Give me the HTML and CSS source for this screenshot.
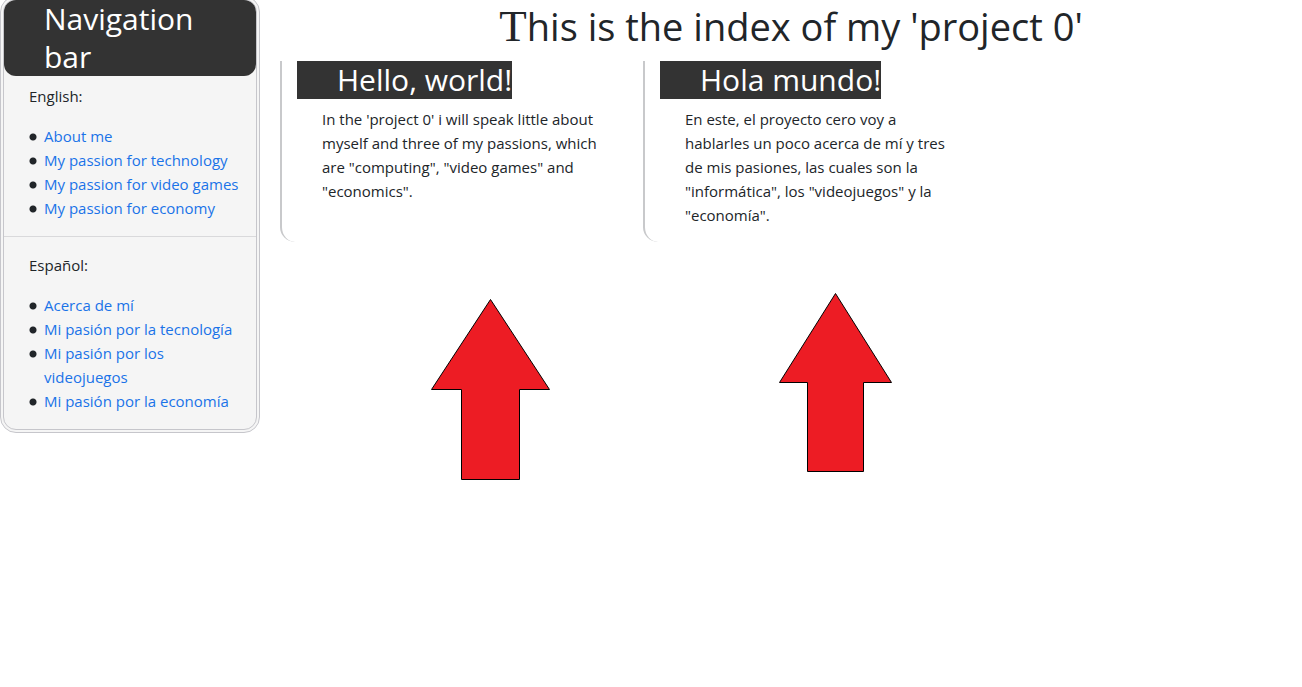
FILE: index.html
```html
<!DOCTYPE html>
<html lang="en">
<head>
<meta charset="utf-8">
<meta name="viewport" content="width=device-width, initial-scale=1">
<title>Project 0</title>
<link rel="stylesheet" href="styles.css">
</head>
<body>
<div class="page">
  <nav class="sidebar">
    <h2 class="heading sidebar-title">Navigation bar</h2>
    <p class="label">English:</p>
    <ul class="links">
      <li><a href="#about">About me</a></li>
      <li><a href="#technology">My passion for technology</a></li>
      <li><a href="#games">My passion for video games</a></li>
      <li><a href="#economy">My passion for economy</a></li>
    </ul>
    <hr class="divider">
    <p class="label">Español:</p>
    <ul class="links">
      <li><a href="#acerca">Acerca de mí</a></li>
      <li><a href="#tecnologia">Mi pasión por la tecnología</a></li>
      <li><a href="#videojuegos">Mi pasión por los videojuegos</a></li>
      <li><a href="#economia">Mi pasión por la economía</a></li>
    </ul>
  </nav>
  <main class="content">
    <h1 class="title">This is the index of my 'project 0'</h1>
    <div class="columns">
      <section class="column">
        <h2 class="heading">Hello, world!</h2>
        <p class="text">In the 'project 0' i will speak little about myself and three of my passions, which are "computing", "video games" and "economics".</p>
      </section>
      <section class="column" lang="es">
        <h2 class="heading">Hola mundo!</h2>
        <p class="text">En este, el proyecto cero voy a hablarles un poco acerca de mí y tres de mis pasiones, las cuales son la "informática", los "videojuegos" y la "economía".</p>
      </section>
    </div>
    <div class="arrows">
      <svg class="arrow" width="119" height="181" viewBox="0 0 119 181" aria-hidden="true"><path d="M59.5 .5L118.500 90.500H88.500V180.500H30.500V90.500H.5Z"/></svg>
      <svg class="arrow" width="113" height="179" viewBox="0 0 113 179" aria-hidden="true"><path d="M56.500 .5L112.500 89.500H84.500V178.500H28.500V89.500H.5Z"/></svg>
    </div>
  </main>
</div>
</body>
</html>
```
FILE: styles.css
```css
* {
  box-sizing: border-box;
}

body {
  margin: 0;
  background: #fff;
  color: #212529;
  font: 15px/24px "Open Sans", "Noto Sans", sans-serif;
}

.page {
  display: flex;
  align-items: flex-start;
  gap: 20px;
}

.sidebar {
  flex: 0 0 260px;
  margin-top: -4px;
  border: 4px double #c6c6cb;
  border-radius: 16px;
  background: #f5f5f5;
}

.heading {
  width: fit-content;
  margin: 0 0 8px;
  padding-left: 40px;
  background: #333;
  color: #fff;
  font-size: 30px;
  font-weight: 400;
  line-height: 38px;
}

.sidebar-title {
  width: auto;
  padding-right: 40px;
  border-radius: 12px;
}

.label {
  margin: 0 0 16px;
  padding-left: 25px;
}

.links {
  margin: 0 0 16px;
  padding: 0 12px 0 25px;
  list-style: none;
}

.links li {
  padding-left: 15px;
  background: radial-gradient(circle at 4px 13px, #212529 3px, transparent 4px) no-repeat;
}

.links a {
  color: #1a73e8;
  text-decoration: none;
}

.divider {
  margin: 16px 0;
  border: 0;
  border-top: 1px solid #d9d9db;
}

.content {
  flex: 1;
  min-width: 0;
}

.title {
  margin: 0 0 8px;
  font-size: 38px;
  font-weight: 400;
  line-height: 53px;
  text-align: center;
}

.title::first-letter {
  font-family: "Liberation Serif", serif;
  font-size: 45px;
}

.columns {
  display: flex;
}

.column {
  flex: 0 1 363px;
  min-height: 181px;
  padding: 0 15px;
  border-left: 2px solid #c8c9cb;
  border-bottom-left-radius: 15px;
}

.text {
  margin: 0;
  padding: 0 28px 0 25px;
}

.arrows {
  display: flex;
  align-items: flex-end;
  gap: 229px;
  padding: 51px 0 0 151px;
}

.arrow {
  fill: #ed1c24;
  stroke: #000;
}

.arrow:last-child {
  margin-bottom: 8px;
}
```
